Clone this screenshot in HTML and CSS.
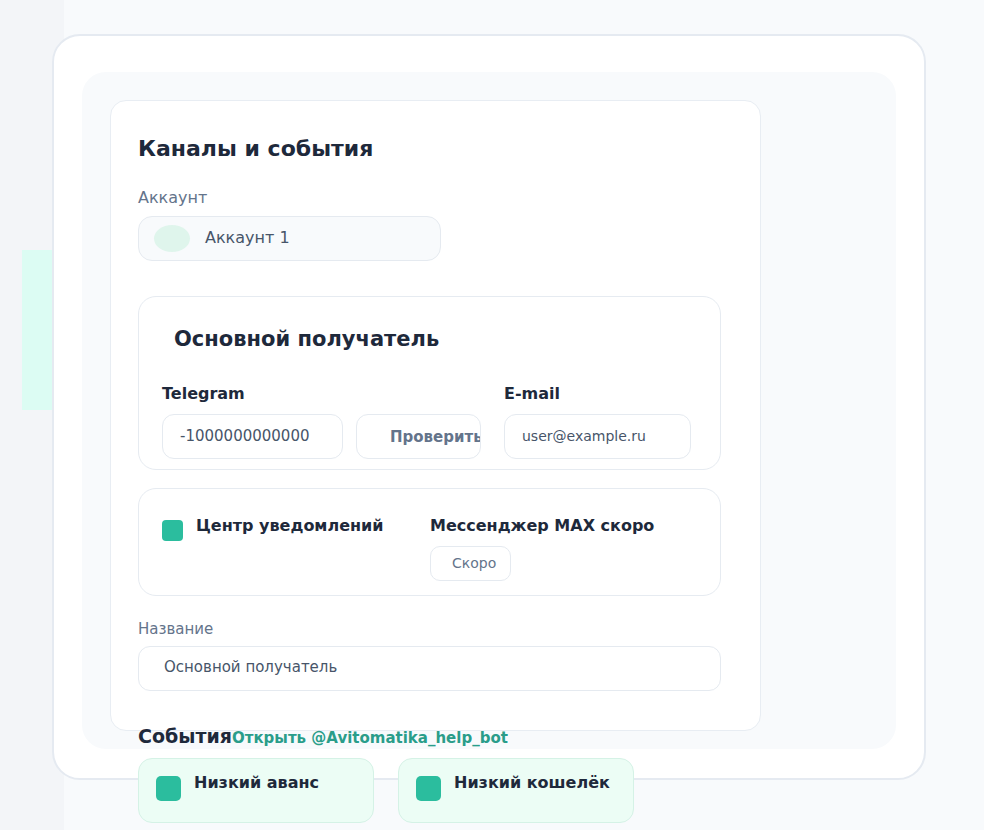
FILE: index.html
```html
<!DOCTYPE html>
<html lang="ru">
<head>
  <meta charset="UTF-8">
  <meta name="viewport" content="width=device-width, initial-scale=1.0">
  <title>Каналы и события</title>
  <link rel="stylesheet" href="styles.css">
</head>
<body>
  <div class="app">
    <aside class="sidebar">
      <div class="nav-active"></div>
    </aside>

    <main class="main">
      <section class="shell">
        <div class="panel">
          <div class="settings-card">
            <h2 class="card-title">Каналы и события</h2>

            <div class="field-label">Аккаунт</div>
            <div class="account-pill">
              <span class="account-avatar"></span>
              <span class="account-name">Аккаунт 1</span>
            </div>

            <!-- Основной получатель -->
            <div class="section recipient">
              <h3 class="section-title">Основной получатель</h3>
              <div class="recipient-fields">
                <div class="tg-group">
                  <label class="bold-label" for="tg">Telegram</label>
                  <div class="tg-row">
                    <input type="text" id="tg" class="input tg-input" value="-1000000000000">
                    <button type="button" class="check-btn">Проверить</button>
                  </div>
                </div>
                <div class="mail-group">
                  <label class="bold-label" for="mail">E-mail</label>
                  <input type="text" id="mail" class="input mail-input" value="user@example.ru">
                </div>
              </div>
            </div>

            <div class="section channels">
              <div class="channel-col">
                <span class="check"></span>
                <span class="bold-label">Центр уведомлений</span>
              </div>
              <div class="channel-col stack">
                <span class="bold-label">Мессенджер MAX скоро</span>
                <button type="button" class="soon-btn">Скоро</button>
              </div>
            </div>

            <label class="field-label small" for="name">Название</label>
            <input type="text" id="name" class="input name-input" value="Основной получатель">

            <div class="events-head">
              <h3 class="events-title">События</h3>
              <a class="bot-link" href="#">Открыть @Avitomatika_help_bot</a>
            </div>
            <div class="events">
              <div class="event-card">
                <span class="check big"></span>
                <span class="event-name">Низкий аванс</span>
              </div>
              <div class="event-card">
                <span class="check big"></span>
                <span class="event-name">Низкий кошелёк</span>
              </div>
            </div>
          </div>
        </div>
      </section>
    </main>
  </div>
</body>
</html>
```

FILE: styles.css
```css
body {
  margin: 0;
  background: #f8fafc;
  font-family: 'DejaVu Sans', 'Noto Sans', sans-serif;
  color: #1e293b;
  height: 100vh;
  overflow: hidden;
}

.app {
  display: flex;
}

.sidebar {
  width: 64px;
  flex-shrink: 0;
  height: 830px;
  background: #f3f5f8;
}

.nav-active {
  margin: 250px 0 0 22px;
  width: 42px;
  height: 160px;
  background: #dcfcf3;
}

.main {
  padding-top: 34px;
}

.shell {
  margin-left: -12px;
  width: 874px;
  height: 746px;
  box-sizing: border-box;
  border: 2px solid #e5eaf1;
  border-radius: 28px;
  background: #fff;
  padding: 36px 28px 0;
}

.panel {
  height: 677px;
  border-radius: 24px;
  background: #f8fafc;
  padding: 28px 0 0 28px;
  box-sizing: border-box;
}

.settings-card {
  width: 651px;
  height: 631px;
  box-sizing: border-box;
  border: 1px solid #e8edf3;
  border-radius: 16px;
  background: #fff;
  padding: 35px 28px 0 27px;
}

.card-title {
  margin: 0;
  font-size: 22px;
  line-height: 26px;
  font-weight: bold;
  color: #1e293b;
}

.field-label {
  display: block;
  margin-top: 26px;
  font-size: 16px;
  line-height: 20px;
  color: #64748b;
}

.field-label.small {
  margin-top: 23px;
  font-size: 15px;
}

.account-pill {
  margin-top: 8px;
  width: 303px;
  height: 45px;
  box-sizing: border-box;
  border: 1px solid #e5eaf0;
  border-radius: 14px;
  background: #f8fafc;
  display: flex;
  align-items: center;
  gap: 15px;
  padding-left: 15px;
}

.account-avatar {
  width: 36px;
  height: 27px;
  border-radius: 50%;
  background: #dff5ec;
}

.account-name {
  font-size: 16px;
  line-height: 20px;
  margin-top: -2px;
  color: #475569;
}

.section {
  width: 583px;
  box-sizing: border-box;
  border: 1px solid #e6ebf1;
  border-radius: 18px;
  background: #fff;
}

.recipient {
  margin-top: 35px;
  padding: 29px 23px 10px;
}

.section-title {
  margin: 0 0 0 12px;
  font-size: 21px;
  line-height: 26px;
  font-weight: bold;
}

.recipient-fields {
  display: flex;
  gap: 23px;
  margin-top: 32px;
}

.tg-group {
  width: 319px;
}

.bold-label {
  display: block;
  font-size: 16px;
  line-height: 20px;
  font-weight: bold;
  color: #1e293b;
}

.tg-row {
  display: flex;
  gap: 13px;
  margin-top: 10px;
}

.input {
  display: block;
  height: 45px;
  box-sizing: border-box;
  border: 1px solid #e5eaf0;
  border-radius: 12px;
  background: #fff;
  font-family: 'DejaVu Sans', sans-serif;
  font-size: 15px;
  color: #475569;
  outline: none;
}

.tg-input {
  width: 181px;
  padding: 0 17px 2px;
}

.check-btn {
  width: 125px;
  height: 45px;
  box-sizing: border-box;
  border: 1px solid #e5eaf0;
  border-radius: 12px;
  background: #fff;
  padding: 0 0 0 33px;
  text-align: left;
  white-space: nowrap;
  overflow: hidden;
  font-family: 'DejaVu Sans', sans-serif;
  font-size: 15px;
  font-weight: bold;
  color: #64748b;
}

.mail-group .input {
  margin-top: 10px;
}

.mail-input {
  width: 187px;
  padding: 0 17px 2px;
  font-size: 14px;
}

.channels {
  margin-top: 18px;
  height: 108px;
  display: flex;
  padding: 27px 23px 0;
}

.channel-col {
  display: flex;
  align-items: flex-start;
  gap: 13px;
}

.channel-col:first-child {
  width: 268px;
}

.channel-col.stack {
  flex-direction: column;
  gap: 10px;
}

.check {
  width: 21px;
  height: 21px;
  margin-top: 4px;
  flex-shrink: 0;
  border-radius: 4px;
  background: #2bbd9e;
}

.check.big {
  width: 25px;
  height: 25px;
  margin-top: 3px;
  border-radius: 5px;
}

.soon-btn {
  width: 81px;
  height: 35px;
  box-sizing: border-box;
  border: 1px solid #e5eaf0;
  border-radius: 10px;
  background: #fff;
  padding: 0 0 2px 21px;
  text-align: left;
  font-family: 'DejaVu Sans', sans-serif;
  font-size: 14px;
  color: #64748b;
}

.name-input {
  margin-top: 7px;
  width: 583px;
  padding: 0 25px 3px;
}

.events-head {
  margin-top: 33px;
  display: flex;
  align-items: baseline;
}

.events-title {
  margin: 0;
  font-size: 19px;
  line-height: 24px;
  font-weight: bold;
}

.bot-link {
  font-size: 15px;
  font-weight: bold;
  color: #2a9d8a;
  text-decoration: none;
}

.events {
  display: flex;
  gap: 24px;
  margin-top: 10px;
}

.event-card {
  width: 236px;
  height: 65px;
  box-sizing: border-box;
  border: 1px solid #d5f2e6;
  border-radius: 14px;
  background: #ecfdf5;
  padding: 14px 17px;
  display: flex;
  align-items: flex-start;
  gap: 13px;
}

.event-name {
  font-size: 16px;
  line-height: 20px;
  font-weight: bold;
  color: #1e293b;
}
```
